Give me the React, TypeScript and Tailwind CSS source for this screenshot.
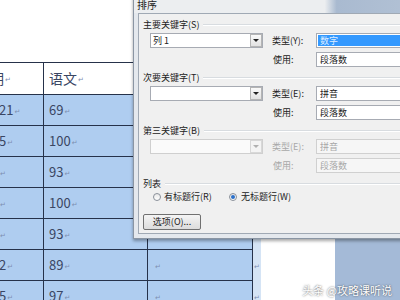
import React from "react";

const rows = [
  { a: "21", b: "69" },
  { a: "5", b: "100" },
  { a: "", b: "93" },
  { a: "", b: "100" },
  { a: "", b: "93" },
  { a: "2", b: "89" },
  { a: "5", b: "97" },
];

const Mark = () => (
  <span className="font-['DejaVu_Sans'] text-[7px] text-[#7d8db0] ml-[1px] relative top-[2px]">↵</span>
);

const Arrow = ({ disabled }: { disabled?: boolean }) => (
  <div
    className={`w-[12px] h-[13px] flex items-center justify-center border ${
      disabled ? "border-[#d8d8d8] bg-[#f4f4f4]" : "border-[#b5b5b5] bg-gradient-to-b from-[#fafafa] to-[#e2e2e2]"
    }`}
  >
    <div
      className={`w-0 h-0 border-l-[3px] border-r-[3px] border-t-[3px] border-l-transparent border-r-transparent ${
        disabled ? "border-t-[#b0b0b0]" : "border-t-[#222]"
      }`}
    />
  </div>
);

const Combo = ({ text, disabled }: { text: string; disabled?: boolean }) => (
  <div
    className={`ml-[7px] w-[113px] h-[15px] border flex items-center justify-between pl-[2px] pr-0 ${
      disabled ? "border-[#cfcfcf] bg-[#fafafa]" : "border-[#a7abb3] bg-white"
    }`}
  >
    <span className="text-[9px] leading-[10px] text-[#222]">{text}</span>
    <Arrow disabled={disabled} />
  </div>
);

const Field = ({ text, disabled, selected }: { text: string; disabled?: boolean; selected?: boolean }) => (
  <div
    className={`w-[100px] h-[15px] border p-[1px] ${
      disabled ? "border-[#d0d0d0] bg-[#f6f6f6]" : "border-[#a7abb3] bg-white"
    }`}
  >
    <div
      className={`h-full flex items-center pl-[2px] text-[9px] leading-[10px] ${
        selected ? "bg-[#3399ff] text-[#dcecff]" : disabled ? "text-[#a8a8a8]" : "text-[#222]"
      }`}
    >
      {text}
    </div>
  </div>
);

const GroupLabel = ({ text }: { text: string }) => (
  <div className="mt-[6px] h-[10px] flex items-center">
    <span className="text-[9px] leading-[10px] whitespace-nowrap text-[#222]">{text}</span>
    <div className="flex-1 ml-[4px] h-[2px] border-t border-t-[#d8dce0] border-b border-b-white" />
  </div>
);

const KeyGroup = ({
  title,
  combo,
  typeLabel,
  typeText,
  useText,
  disabled,
  selected,
}: {
  title: string;
  combo: string;
  typeLabel: string;
  typeText: string;
  useText: string;
  disabled?: boolean;
  selected?: boolean;
}) => (
  <>
    <GroupLabel text={title} />
    <div className="mt-[3px] flex">
      <Combo text={combo} disabled={disabled} />
      <div className="ml-[9px] flex flex-col gap-[4px]">
        <div className="flex items-center">
          <span className={`w-[44px] text-[9px] leading-[10px] ${disabled ? "text-[#a8a8a8]" : "text-[#222]"}`}>{typeLabel}</span>
          <Field text={typeText} disabled={disabled} selected={selected} />
        </div>
        <div className="flex items-center">
          <span className={`w-[44px] pl-[1px] text-[9px] leading-[10px] ${disabled ? "text-[#a8a8a8]" : "text-[#222]"}`}>使用:</span>
          <Field text={useText} disabled={disabled} />
        </div>
      </div>
    </div>
  </>
);

const Radio = ({ checked }: { checked?: boolean }) => (
  <div className="w-[8px] h-[8px] rounded-full border border-[#8a9099] bg-gradient-to-b from-[#e8e8e8] to-[#ffffff] flex items-center justify-center">
    {checked && <div className="w-[4px] h-[4px] rounded-full bg-[#2a6fc9]" />}
  </div>
);

export default function App() {
  return (
    <div className="relative w-[400px] h-[300px] overflow-hidden bg-[#a4bad7] flex font-['Noto_Sans_CJK_SC',sans-serif]">
      {/* Document page */}
      <div className="w-[335px] h-[300px] shrink-0 bg-white overflow-hidden pt-[62px]">
        <div className="ml-[-20px] grid grid-cols-[64px_104px_105px_8px] text-[#3a4663]">
          <div className="h-[33px] border-t border-b border-r border-[#26324a] flex items-center text-[14px]">
            <span className="ml-[-4px]">日期</span>
            <Mark />
          </div>
          <div className="h-[33px] border-t border-b border-r border-[#26324a] flex items-center pl-[5px] text-[14px]">
            语文<Mark />
          </div>
          <div className="h-[33px] border-t border-b border-r border-[#26324a] flex items-center pl-[7px] text-[14px]">
            <Mark />
          </div>
          <div className="h-[33px] flex items-center">
            <Mark />
          </div>
          {rows.map((r, i) => (
            <React.Fragment key={i}>
              <div className="h-[31px] border-b border-r border-[#26324a] bg-[#afcdf0] flex items-center pl-[19px] text-[13px]">
                {r.a}
                <Mark />
              </div>
              <div className="h-[31px] border-b border-r border-[#26324a] bg-[#afcdf0] flex items-center pl-[5px] text-[13px]">
                {r.b}
                <Mark />
              </div>
              <div className="h-[31px] border-b border-r border-[#26324a] bg-[#afcdf0] flex items-center pl-[6px] text-[13px]">
                <Mark />
              </div>
              <div className="h-[31px] bg-[#d5e4f5] flex items-center">
                <Mark />
              </div>
            </React.Fragment>
          ))}
        </div>
      </div>

      {/* Sort dialog */}
      <div className="absolute left-[133px] top-[-10px] w-[300px] h-[249px] border border-[#8a95a3] bg-[#e4e8ed] shadow-[0_2px_3px_rgba(0,0,0,0.35)] flex flex-col">
        <div className="h-[22px] px-[3px] pt-[1px] bg-[linear-gradient(to_right,#eceef0_0%,#eceef0_64%,#a9bad0_68%,#b4c3d6_100%)]">
          <span className="relative top-[-2px] text-[10px] leading-[12px] text-[#222]">排序</span>
        </div>
        <div className="ml-[4px] mr-[4px] h-[221px] border border-[#a0a9b4] bg-[#f0f0f0] pl-[4px] flex flex-col">
          <KeyGroup title="主要关键字(S)" combo="列 1" typeLabel="类型(Y):" typeText="数字" useText="段落数" selected />
          <KeyGroup title="次要关键字(T)" combo="" typeLabel="类型(E):" typeText="拼音" useText="段落数" />
          <KeyGroup title="第三关键字(B)" combo="" typeLabel="类型(E):" typeText="拼音" useText="段落数" disabled />
          <GroupLabel text="列表" />
          <div className="mt-[3px] h-[10px] flex items-center">
            <div className="ml-[10px] w-[76px] flex items-center">
              <Radio />
              <span className="ml-[3px] text-[9px] leading-[10px] text-[#222]">有标题行(R)</span>
            </div>
            <Radio checked />
            <span className="ml-[4px] text-[9px] leading-[10px] text-[#222]">无标题行(W)</span>
          </div>
          <div className="mt-[12px] w-[58px] h-[16px] border border-[#707070] rounded-[2px] bg-gradient-to-b from-[#f4f4f4] to-[#dcdcdc] flex items-center justify-center text-[9px] leading-[10px] text-[#222]">
            选项(O)...
          </div>
        </div>
      </div>

      {/* watermark */}
      <div className="absolute right-[8px] bottom-[3px] text-[11px] leading-[14px] text-white [text-shadow:0_0_2px_rgba(0,0,0,0.7)]">
        头条 @攻略课听说
      </div>
    </div>
  );
}
